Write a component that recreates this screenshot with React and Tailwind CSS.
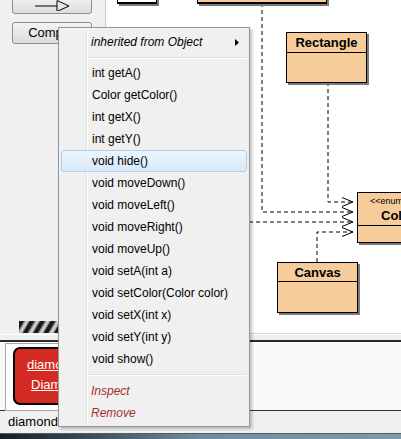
import React from 'react'

const methods = [
  'int getA()',
  'Color getColor()',
  'int getX()',
  'int getY()',
  'void hide()',
  'void moveDown()',
  'void moveLeft()',
  'void moveRight()',
  'void moveUp()',
  'void setA(int a)',
  'void setColor(Color color)',
  'void setX(int x)',
  'void setY(int y)',
  'void show()',
]

const X0 = 106

function ClassBox({ left, top, width, height, head, children, white }) {
  return (
    <div
      className={`absolute flex flex-col border border-black shadow-[2px_2px_0_#7a7a7a] ${white ? 'bg-white' : 'bg-[#f7cc9b]'}`}
      style={{ left: left - X0, top, width, height }}
    >
      <div className="border-b border-black flex flex-col items-center justify-center" style={{ height: head }}>
        {children}
      </div>
    </div>
  )
}

function Arrow({ y }) {
  return <polyline points={`${342 - X0},${y - 4.5} ${353 - X0},${y} ${342 - X0},${y + 4.5}`} fill="none" stroke="#000" strokeWidth="1" />
}

export default function App() {
  const dash = { fill: 'none', stroke: '#000', strokeWidth: 1, strokeDasharray: '4 3' }
  return (
    <div className="relative w-[401px] h-[439px] overflow-hidden bg-[#f0f0f0] text-[12px] text-black" style={{ fontFamily: '"Liberation Sans", Arial, sans-serif' }}>
      {/* top: tool panel + diagram */}
      <div className="flex h-[334px]">
        <div className="w-[106px] shrink-0 border-r border-[#c9c9c9] flex flex-col px-[12px] pr-[13px] relative">
          <div className="h-[18px] -mt-[4px] rounded-[3px] border border-[#8e8e8e] bg-gradient-to-b from-[#f4f4f4] to-[#dcdcdc] flex items-center justify-center">
            <svg width="40" height="12" viewBox="0 0 40 12">
              <line x1="3" y1="7" x2="25" y2="7" stroke="#000" />
              <polygon points="25,1.5 37,7 25,12.5" fill="none" stroke="#000" />
            </svg>
          </div>
          <div className="h-[22px] mt-[8px] rounded-[3px] border border-[#8e8e8e] bg-gradient-to-b from-[#f4f4f4] to-[#dcdcdc] flex items-center justify-center text-[13px]">
            Compile
          </div>
          <div className="mt-auto mb-[1px] ml-[7px] w-[39px] h-[12px] bg-[repeating-linear-gradient(-60deg,#1a1a1a_0px,#1a1a1a_3px,#9a9a9a_4px,#dedede_6px,#7a7a7a_8px,#1a1a1a_9px)]" />
        </div>
        <div className="relative flex-1 bg-white border-b border-[#d6d6d6] overflow-hidden">
          <svg className="absolute inset-0" width="295" height="334">
            <path d={`M${262 - X0} 3 V212 H${353 - X0}`} style={dash} />
            <path d={`M${328 - X0} 82 V202 H${353 - X0}`} style={dash} />
            <path d={`M${200 - X0} 222 H${353 - X0}`} style={dash} />
            <path d={`M${317 - X0} 262 V232 H${353 - X0}`} style={dash} />
            <Arrow y={202} />
            <Arrow y={212} />
            <Arrow y={222} />
            <Arrow y={232} />
          </svg>
          <ClassBox left={117} top={-20} width={40} height={24} head={23} white />
          <ClassBox left={197} top={-20} width={130} height={24} head={23} />
          <ClassBox left={286} top={32} width={81} height={51} head={20}>
            <span className="font-bold text-[13px] leading-none">Rectangle</span>
          </ClassBox>
          <ClassBox left={357} top={192} width={64} height={51} head={33}>
            <span className="text-[9px] leading-none self-start pl-[12px] mt-[1px]">&lt;&lt;enum&gt;&gt;</span>
            <span className="font-bold text-[13px] leading-none self-start pl-[23px] mt-[3px]">Color</span>
          </ClassBox>
          <ClassBox left={277} top={262} width={81} height={51} head={19}>
            <span className="font-bold text-[13px] leading-none">Canvas</span>
          </ClassBox>
        </div>
      </div>
      {/* splitter */}
      <div className="h-[6px] border-t border-white" />
      {/* object bench */}
      <div className="h-[71px] bg-[#fafafa] border-t-2 border-t-[#2a2a2a] border-b border-b-[#333] pl-[5px] pt-[1px]">
        <div className="w-[70px] h-[68px] border border-[#a8a8a8] bg-[#fdfdfd] pl-[7px] pt-[3px]">
          <div className="w-[70px] h-[58px] rounded-[7px] border-2 border-black bg-[#d42a24] text-white text-[13px] flex flex-col pl-[12px] pt-[8px] gap-[4px]">
            <span className="underline leading-[16px]">diamond1</span>
            <span className="underline leading-[16px] pl-[4px]">Diamond</span>
          </div>
        </div>
      </div>
      <div className="h-[22px] pl-[8px] text-[13px] leading-[22px]">diamond1</div>
      <div className="h-[7px] border-t border-[#5a5a5a] bg-gradient-to-r from-[#13202c] via-[#6f8ea3] to-[#7d9aae]" />

      {/* context menu */}
      <div className="absolute left-[58px] top-[27px] w-[192px] bg-[#f0f0f0] border border-[#979797] pt-[3px] pb-[2px] shadow-[2px_2px_3px_rgba(0,0,0,0.25)]">
        <div className="absolute left-[27px] top-[2px] bottom-[2px] w-[2px] border-l border-[#e2e3e3] border-r border-r-white" />
        <div className="relative h-[22px] flex items-center pl-[32px] italic">
          inherited from Object
          <svg className="absolute right-[10px] top-[8px]" width="4" height="7" viewBox="0 0 4 7">
            <polygon points="0,0 4,3.5 0,7" fill="#000" />
          </svg>
        </div>
        <div className="h-[9px] flex items-center pl-[29px] pr-[2px]">
          <div className="w-full h-[2px] border-t border-[#e0e0e0] border-b border-b-white" />
        </div>
        {methods.map(m => (
          <div key={m} className="relative h-[22px] px-[2px]">
            <div className={`h-full flex items-center pl-[30px] rounded-[3px] border ${m === 'void hide()' ? 'border-[#aed0ef] bg-gradient-to-b from-[#eef5fc] to-[#d8e9f8]' : 'border-transparent'}`}>
              {m}
            </div>
          </div>
        ))}
        <div className="h-[10px] flex items-center pl-[29px] pr-[2px]">
          <div className="w-full h-[2px] border-t border-[#e0e0e0] border-b border-b-white" />
        </div>
        <div className="h-[22px] flex items-center pl-[32px] italic text-[#a0302e]">Inspect</div>
        <div className="h-[22px] flex items-center pl-[32px] italic text-[#a0302e]">Remove</div>
      </div>
    </div>
  )
}
